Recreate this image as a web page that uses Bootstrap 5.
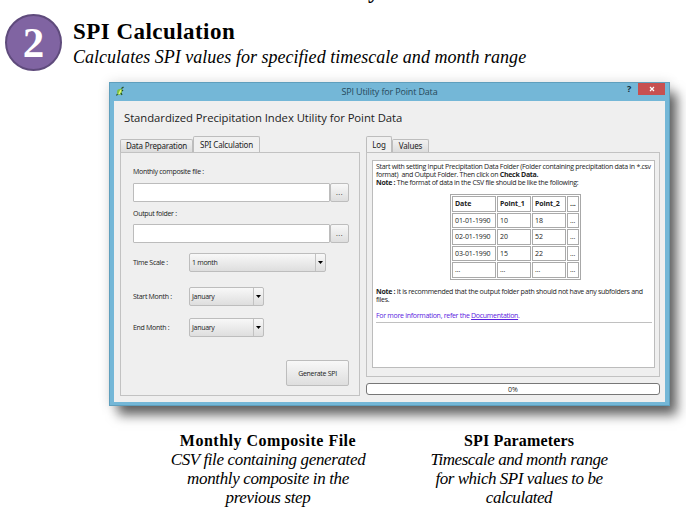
<!DOCTYPE html>
<html lang="en">
<head>
<meta charset="utf-8">
<meta name="viewport" content="width=device-width, initial-scale=1">
<title>SPI Calculation</title>
<link href="https://cdn.jsdelivr.net/npm/bootstrap@5.3.0/dist/css/bootstrap.min.css" rel="stylesheet">
<style>
body{margin:0;background:#fff;color:#000}
.slide{width:686px;height:515px;font-family:"Liberation Serif",serif}
.title-tail{left:368px;top:-20px;font-size:23px;line-height:22px;font-weight:700}
.intro{height:82px;padding:14px 0 0 5px}
.step{width:57px;height:57px;border-radius:50%;background:#8064a2;border:2px solid #5f4b7c;color:#fff;font-size:43px;line-height:53px;font-weight:700}
.head{margin:5px 0 0 11px}
.head h1{font-size:23px;line-height:25px;font-weight:700;margin:0;letter-spacing:.46px}
.head p{font-size:18px;line-height:27px;font-style:italic;margin:0;letter-spacing:.02px}
.win{width:561px;height:324px;margin-left:109px;background:#74b7d7;border:1px solid #5f9fbd;padding:0 4px 4px;box-shadow:8px 10px 11px -1px rgba(0,0,0,.6),0 0 11px rgba(0,0,0,.13);font-family:"Open Sans","Noto Sans",sans-serif;font-size:7px;line-height:8px;color:#222}
.bar{height:18px}
.bar .logo{width:10px;height:11px;left:1px;top:3px}
.bar .caption{font-size:9px;line-height:17px;color:#26485a;letter-spacing:-.16px}
.bar .help{left:513px;top:0;font-size:9px;line-height:12px;font-weight:700;color:#102c3a}
.bar .close-box{right:0;top:0;width:27px;height:12px;background:#c75050}
.client{height:301px;background:#efefef;padding:9px 5px 5px 6px}
.client h2{font-size:11.3px;line-height:16px;margin:0 0 0 4px;letter-spacing:-.05px;font-weight:400;color:#222}
.cols{margin-top:11px;gap:6px}
.left{width:240px;letter-spacing:-.3px}.right{width:295px}
.tabs{height:15px;font-family:"Noto Sans",sans-serif;font-size:8px;letter-spacing:-.18px}
.tb{height:13px;line-height:12px;border:1px solid #bdbdbd;border-bottom:0;border-radius:2px 2px 0 0;background:linear-gradient(#f1f1f1,#dcdcdc);text-align:center;white-space:nowrap}
.tb.on{height:16px;line-height:15px;background:#f0f0f0;position:relative;z-index:1}
.pane{border:1px solid #c2c2c2}
.left .pane{height:244px;padding:15px 10px 0 12px}
.lab{height:8px;white-space:nowrap}
.field{height:19px}
.field .txt{width:197px;border:1px solid #bcbcbc;border-radius:1px;background:#fff}
.ctl{border:1px solid #bdbdbd;border-radius:2px;background:linear-gradient(#f8f8f8,#dedede)}
.field .ctl{width:19px;text-align:center;line-height:17px;letter-spacing:.5px}
.opt .lab{width:56px}
.sel{height:19px;padding-left:2px;line-height:18px}
.sel .drop{width:10px;border-left:1px solid #c2c2c2}
.gen{width:63px;height:26px;line-height:25px;margin:23px 0 0 153px;text-align:center}
.right .pane{height:225px;padding:7px 4px 0 5px}
.log{height:208px;border:1px solid #bcbcbc;background:#fff;padding:2px 2px 0 3px;white-space:nowrap;letter-spacing:-.29px}
.log b{font-weight:700}
.grid{width:131px;margin:7px 0 8px 74px;border:1px solid #a8a8a8;border-collapse:separate;border-spacing:1px;table-layout:fixed;letter-spacing:-.1px}
.grid th,.grid td{height:15px;border:1px solid #aaa;padding:0 0 0 2px;line-height:8px;vertical-align:middle;overflow:hidden}
.grid tr:nth-child(odd) td,.grid tr:nth-child(odd) th{height:16px}
.link{color:#5a22e0}
.rule{height:1px;background:#c0c0c0;margin-top:2px}
.prog{height:12px;border:1px solid #777;border-radius:3px;background:#fff;margin-top:6px;text-align:center;line-height:11px}
.notes{margin-top:25px;font-size:17px;line-height:19px;text-align:center}
.notes h3{font-size:16px;line-height:19px;font-weight:700;margin:0;letter-spacing:.5px}
.notes p{font-style:italic;margin:0;white-space:nowrap;letter-spacing:-.36px}
.notes .n2 h3{letter-spacing:.15px}
.notes .n2 p{letter-spacing:-.45px}
.n1{width:210px;margin-left:163px}.n2{width:210px;margin-left:41px}
.t1{width:73px}.t2{width:67px}.t3{width:26px}.t4{width:37px}
.f1{margin-top:7px}.l2{margin-top:8px}.f2{margin-top:6px}.o1{margin-top:10px}.o2{margin-top:15px}.o3{margin-top:12px}
.s1{width:137px}.s2{width:75px}
.c1{width:44px}.c2{width:34px}
</style>
</head>
<body>
<main class="slide position-relative overflow-hidden">
  <span class="title-tail position-absolute">y</span>
  <header class="intro d-flex">
    <div class="step text-center flex-shrink-0">2</div>
    <div class="head text-nowrap">
      <h1>SPI Calculation</h1>
      <p>Calculates SPI values for specified timescale and month range</p>
    </div>
  </header>
  <section class="win">
    <div class="bar position-relative d-flex">
      <svg class="logo position-absolute" viewBox="0 0 10 11"><path d="M2 6Q2 3 5 3L7 2 7 5Q7 9 4 9Q2 9 2 6Z" fill="#7cc043"/><path d="M4 8L6 4" stroke="#e8f57a" stroke-width="1.6"/><path d="M6.500 2.500L8.500 1M2.500 8L1.500 9.500M6 7L7 9M8 4L7 5" stroke="#234c25" stroke-width="1.200"/></svg>
      <div class="caption flex-fill text-center">SPI Utility for Point Data</div>
      <span class="help position-absolute">?</span>
      <span class="close-box position-absolute d-flex align-items-center justify-content-center"><svg width="6" height="6" viewBox="0 0 6 6"><path d="M1 1L5 5M5 1L1 5" stroke="#fff" stroke-width="1.2"/></svg></span>
    </div>
    <div class="client">
      <h2>Standardized Precipitation Index Utility for Point Data</h2>
      <div class="cols d-flex">
        <div class="left">
          <div class="tabs d-flex align-items-end"><div class="tb t1">Data Preparation</div><div class="tb on t2">SPI Calculation</div></div>
          <div class="pane">
            <div class="lab">Monthly composite file :</div>
            <div class="field d-flex f1"><div class="txt"></div><div class="ctl">...</div></div>
            <div class="lab l2">Output folder :</div>
            <div class="field d-flex f2"><div class="txt"></div><div class="ctl">...</div></div>
            <div class="opt d-flex align-items-center o1"><div class="lab">Time Scale :</div><div class="ctl sel s1 d-flex justify-content-between">1 month<span class="drop d-flex align-items-center justify-content-center"><svg width="5" height="3" viewBox="0 0 5 3"><path d="M0 0H5L2.5 3Z"/></svg></span></div></div>
            <div class="opt d-flex align-items-center o2"><div class="lab">Start Month :</div><div class="ctl sel s2 d-flex justify-content-between">January<span class="drop d-flex align-items-center justify-content-center"><svg width="5" height="3" viewBox="0 0 5 3"><path d="M0 0H5L2.5 3Z"/></svg></span></div></div>
            <div class="opt d-flex align-items-center o3"><div class="lab">End Month :</div><div class="ctl sel s2 d-flex justify-content-between">January<span class="drop d-flex align-items-center justify-content-center"><svg width="5" height="3" viewBox="0 0 5 3"><path d="M0 0H5L2.5 3Z"/></svg></span></div></div>
            <div class="ctl gen">Generate SPI</div>
          </div>
        </div>
        <div class="right">
          <div class="tabs d-flex align-items-end"><div class="tb on t3">Log</div><div class="tb t4">Values</div></div>
          <div class="pane">
            <div class="log">
              <div>Start with setting Input Precipitation Data Folder (Folder containing precipitation data in *.csv</div>
              <div>format)&nbsp; and Output Folder. Then click on <b>Check Data.</b></div>
              <div><b>Note :</b> The format of data in the CSV file should be like the following:</div>
              <table class="grid">
                <colgroup><col class="c1"><col class="c2"><col class="c2"><col></colgroup>
                <tr><th>Date</th><th>Point_1</th><th>Point_2</th><th>...</th></tr>
                <tr><td>01-01-1990</td><td>10</td><td>18</td><td>...</td></tr>
                <tr><td>02-01-1990</td><td>20</td><td>52</td><td>...</td></tr>
                <tr><td>03-01-1990</td><td>15</td><td>22</td><td>...</td></tr>
                <tr><td>...</td><td>...</td><td>...</td><td>...</td></tr>
              </table>
              <div><b>Note :</b> It is recommended that the output folder path should not have any subfolders and</div>
              <div>files.</div>
              <div class="link mt-2">For more information, refer the <u>Documentation</u>.</div>
              <div class="rule"></div>
            </div>
          </div>
          <div class="prog">0%</div>
        </div>
      </div>
    </div>
  </section>
  <footer class="notes d-flex">
    <div class="n1"><h3>Monthly Composite File</h3><p>CSV file containing generated</p><p>monthly composite in the</p><p>previous step</p></div>
    <div class="n2"><h3>SPI Parameters</h3><p>Timescale and month range</p><p>for which SPI values to be</p><p>calculated</p></div>
  </footer>
</main>
<script src="https://cdn.jsdelivr.net/npm/bootstrap@5.3.0/dist/js/bootstrap.bundle.min.js"></script>
</body>
</html>
